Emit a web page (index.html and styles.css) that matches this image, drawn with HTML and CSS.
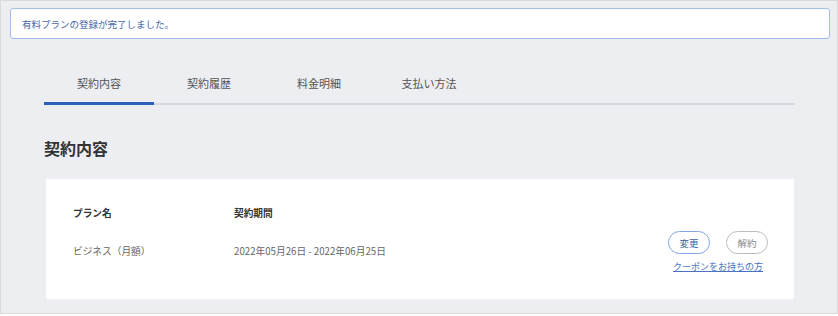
FILE: index.html
```html
<!DOCTYPE html>
<html lang="ja">
<head>
    <meta charset="UTF-8">
    <title>契約内容</title>
    <link rel="stylesheet" href="styles.css">
</head>
<body>
    <div class="frame">
        <!-- 完了メッセージ -->
        <div class="alert">有料プランの登録が完了しました。</div>

        <!-- タブ -->
        <div class="tabs">
            <a href="#" class="tab active">契約内容</a>
            <a href="#" class="tab">契約履歴</a>
            <a href="#" class="tab">料金明細</a>
            <a href="#" class="tab">支払い方法</a>
        </div>

        <h2 class="section-title">契約内容</h2>

        <!-- 契約カード -->
        <div class="card">
            <div class="plan-grid">
                <div class="label">プラン名</div>
                <div class="label">契約期間</div>
                <div class="value">ビジネス（月額）</div>
                <div class="value">2022年05月26日 - 2022年06月25日</div>
            </div>
            <div class="actions">
                <div class="buttons">
                    <button class="pill primary">変更</button>
                    <button class="pill">解約</button>
                </div>
                <a href="#" class="coupon-link">クーポンをお持ちの方</a>
            </div>
        </div>
    </div>
</body>
</html>
```

FILE: styles.css
```css
body {
    margin: 0;
    padding: 0;
    font-family: "Noto Sans CJK JP", "Noto Sans", sans-serif;
    background-color: #fff;
}
.frame {
    box-sizing: border-box;
    width: 838px;
    height: 314px;
    border: 1px solid #d9dadd;
    background-color: #eceef2;
    padding: 7px 7px 0 9px;
}
.alert {
    box-sizing: border-box;
    height: 31px;
    background: white;
    border: 1px solid #a3bbe6;
    border-radius: 3px;
    padding: 0 11px;
    display: flex;
    align-items: center;
    font-size: 9.5px;
    color: #4467a8;
}
.tabs {
    display: flex;
    margin: 23px 35px 0 34px;
    border-bottom: 2px solid #d6d8dd;
}
.tab {
    width: 110px;
    text-align: center;
    font-size: 11px;
    line-height: 16px;
    padding: 13px 0 11px;
    color: #555;
    text-decoration: none;
    border-bottom: 3px solid transparent;
    margin-bottom: -2px;
}
.tab.active {
    border-bottom-color: #2d5fb8;
}
.section-title {
    margin: 32px 0 0 34px;
    font-size: 16px;
    line-height: 22px;
    font-weight: bold;
    color: #333;
}
.card {
    box-sizing: border-box;
    width: 748px;
    height: 120px;
    margin: 20px 0 0 36px;
    background: white;
    padding: 27px 26px 26px 27px;
    display: flex;
    justify-content: space-between;
}
.plan-grid {
    display: grid;
    grid-template-columns: 161px auto;
    row-gap: 24px;
    align-content: start;
    font-size: 9.7px;
    line-height: 14px;
}
.label {
    font-weight: bold;
    color: #333;
}
.value {
    color: #666;
}
.actions {
    align-self: flex-end;
    display: flex;
    flex-direction: column;
    align-items: center;
    gap: 7px;
}
.buttons {
    display: flex;
    gap: 16px;
}
.pill {
    box-sizing: border-box;
    width: 42px;
    height: 23px;
    border-radius: 12px;
    background: white;
    border: 1.5px solid #bdbdbd;
    font-family: inherit;
    font-size: 9.5px;
    color: #888;
    padding: 0;
    cursor: pointer;
}
.pill.primary {
    border-color: #86a6e3;
    color: #3a5da8;
}
.coupon-link {
    font-size: 9px;
    line-height: 12px;
    color: #4a72c4;
    text-decoration: underline;
}
```
